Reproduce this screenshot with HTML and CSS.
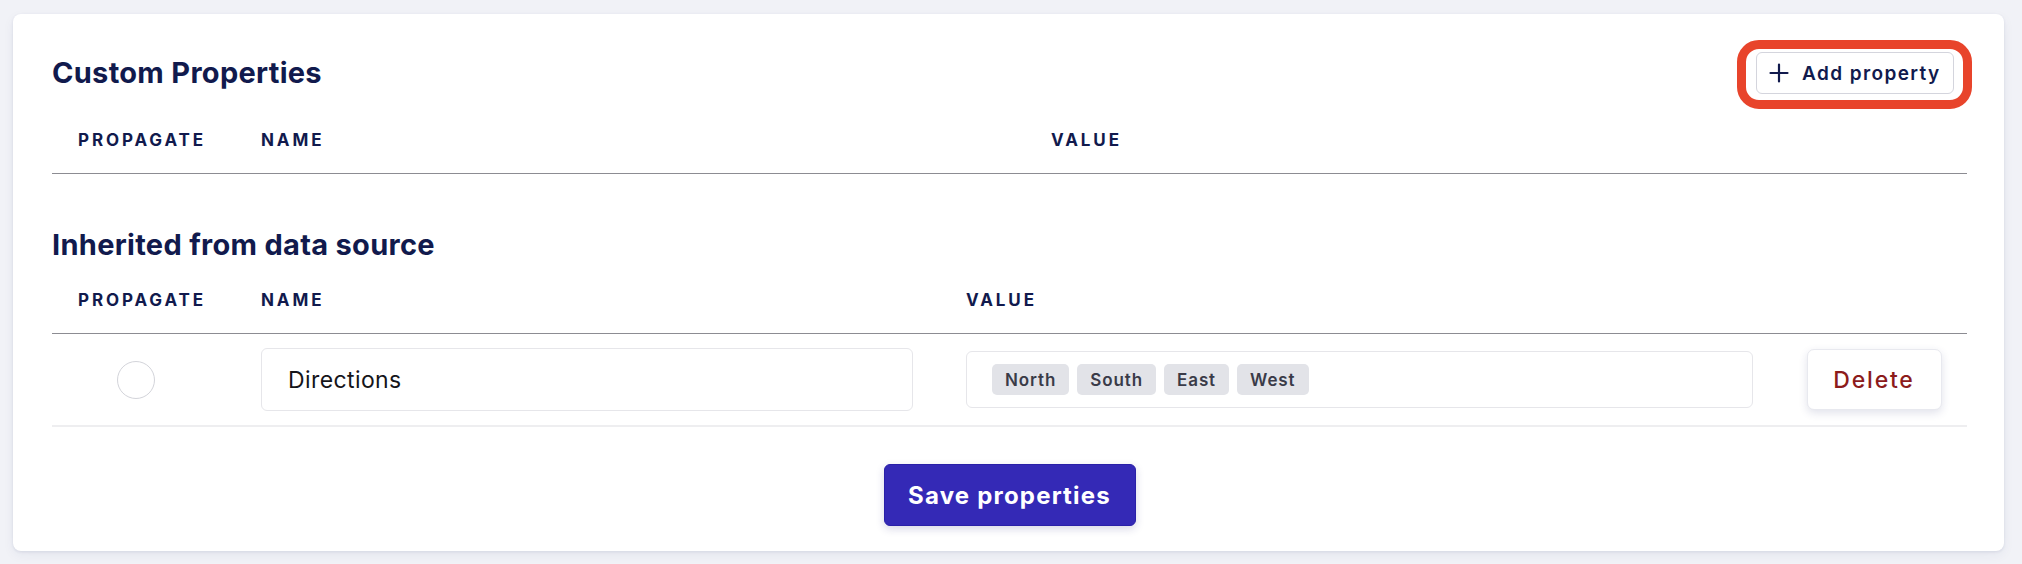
FILE: index.html
```html
<!DOCTYPE html>
<html lang="en">
<head>
<meta charset="utf-8">
<title>Custom Properties</title>
<link rel="stylesheet" href="styles.css">
</head>
<body>
<main class="page">
  <section class="card">
    <div class="card-head">
      <h2 class="title">Custom Properties</h2>
      <div class="add-wrap">
        <button class="btn-add" type="button">
          <svg class="plus" viewBox="0 0 20 20" width="20" height="20" aria-hidden="true"><path d="M10 1.5v17M1.5 10h17" stroke="currentColor" stroke-width="2.2" stroke-linecap="round" fill="none"/></svg>
          <span>Add property</span>
        </button>
        <span class="highlight" aria-hidden="true"></span>
      </div>
    </div>
    <div class="thead thead-custom">
      <div class="th th-prop">Propagate</div>
      <div class="th">Name</div>
      <div class="th">Value</div>
    </div>

    <h2 class="title title-inherited">Inherited from data source</h2>
    <div class="thead thead-inh">
      <div class="th th-prop">Propagate</div>
      <div class="th">Name</div>
      <div class="th">Value</div>
      <div class="th"></div>
    </div>
    <div class="row">
      <div class="cell cell-prop"><span class="radio"></span></div>
      <div class="cell cell-name"><div class="input">Directions</div></div>
      <div class="cell cell-value">
        <div class="tags">
          <span class="tag">North</span>
          <span class="tag">South</span>
          <span class="tag">East</span>
          <span class="tag">West</span>
        </div>
      </div>
      <div class="cell cell-action"><button class="btn-delete" type="button">Delete</button></div>
    </div>
    <div class="footer">
      <button class="btn-save" type="button">Save properties</button>
    </div>
  </section>
</main>
</body>
</html>
```
FILE: styles.css
```css
* { box-sizing: border-box; }
html, body { margin: 0; padding: 0; }
body {
  background: #f1f2f7;
  font-family: "Inter", "Lato", "Noto Sans", sans-serif;
  color: #111a4d;
  width: 2022px;
  height: 564px;
  overflow: hidden;
}
.page {
  padding: 14px 18px 13px 13px;
}
.card {
  background: #ffffff;
  border-radius: 8px;
  box-shadow: 0 1px 3px rgba(40, 50, 110, 0.10), 0 4px 12px rgba(40, 50, 110, 0.06);
  padding: 38px 37px 25px 39px;
}
.card-head {
  display: flex;
  align-items: center;
  justify-content: space-between;
  height: 42px;
}
.title {
  margin: 0;
  font-size: 29px;
  line-height: 36px;
  font-weight: 700;
  color: #111a4d;
  letter-spacing: 0.3px;
}
.add-wrap {
  position: relative;
  margin-right: 13px;
}
.btn-add {
  display: flex;
  align-items: center;
  gap: 13px;
  height: 42px;
  width: 198px;
  padding: 0 12px;
  background: #fff;
  border: 1px solid #d4d5dd;
  border-radius: 6px;
  font-family: inherit;
  font-size: 19px;
  font-weight: 600;
  letter-spacing: 1.4px;
  color: #111a4d;
  white-space: nowrap;
}
.plus { display: block; flex: none; }
.highlight {
  position: absolute;
  left: -19px;
  top: -12px;
  width: 235px;
  height: 69px;
  border: 9px solid #e8442b;
  border-radius: 22px;
  pointer-events: none;
}
.thead {
  display: grid;
  margin-top: 34px;
  padding-bottom: 21px;
  border-bottom: 1px solid #8c8c92;
}
.thead-custom { grid-template-columns: 209px 790px 1fr; }
.thead-inh { grid-template-columns: 209px 705px 815px 1fr; margin-top: 25px; }
.th {
  font-size: 17px;
  line-height: 24px;
  font-weight: 700;
  text-transform: uppercase;
  letter-spacing: 2.9px;
  color: #111a4d;
}
.th-prop { padding-left: 26px; }
.title-inherited { margin-top: 53px; }
.row {
  display: grid;
  grid-template-columns: 209px 705px 815px 1fr;
  align-items: center;
  height: 93px;
  border-bottom: 2px solid #eeeef0;
}
.cell-prop { padding-left: 65px; }
.radio {
  display: block;
  width: 38px;
  height: 38px;
  border-radius: 50%;
  border: 1px solid #d3d4da;
  background: #fff;
}
.cell-name { padding-right: 53px; }
.input {
  height: 63px;
  border: 1px solid #e6e6ea;
  border-radius: 6px;
  padding: 0 26px;
  display: flex;
  align-items: center;
  font-size: 23px;
  color: #15151a;
  letter-spacing: 0.4px;
}
.cell-value { padding-right: 28px; }
.tags {
  height: 57px;
  border: 1px solid #e6e6ea;
  border-radius: 6px;
  padding: 0 25px;
  display: flex;
  align-items: center;
  gap: 8px;
}
.tag {
  display: inline-flex;
  align-items: center;
  height: 31px;
  padding: 0 13px;
  background: #e2e3e8;
  border-radius: 5px;
  font-size: 17px;
  font-weight: 600;
  letter-spacing: 0.9px;
  color: #3a3b48;
}
.cell-action {
  display: flex;
  justify-content: center;
}
.btn-delete {
  width: 135px;
  height: 61px;
  background: #fff;
  border: 1px solid #e8e9ef;
  border-radius: 7px;
  box-shadow: 0 3px 8px rgba(40, 50, 110, 0.14);
  font-family: inherit;
  font-size: 23px;
  font-weight: 500;
  letter-spacing: 1.8px;
  color: #8c1b1b;
}
.footer {
  display: flex;
  justify-content: center;
  margin-top: 37px;
}
.btn-save {
  width: 252px;
  height: 62px;
  background: #3429b6;
  border: 1px solid #2a20a8;
  border-radius: 6px;
  box-shadow: 0 3px 8px rgba(40, 40, 120, 0.18);
  font-family: inherit;
  font-size: 24px;
  font-weight: 700;
  letter-spacing: 1.2px;
  color: #ffffff;
}
```
